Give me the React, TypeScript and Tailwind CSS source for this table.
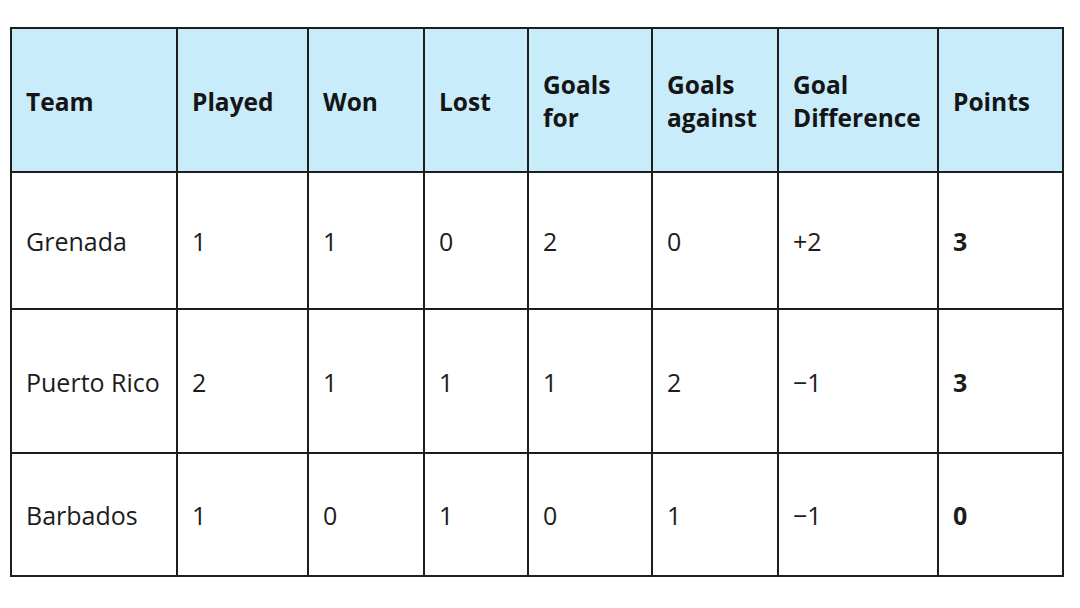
import React from "react";

const header = ["Team", "Played", "Won", "Lost", "Goals\nfor", "Goals\nagainst", "Goal\nDifference", "Points"];
const rows = [
  ["Grenada", "1", "1", "0", "2", "0", "+2", "3"],
  ["Puerto Rico", "2", "1", "1", "1", "2", "\u22121", "3"],
  ["Barbados", "1", "0", "1", "0", "1", "\u22121", "0"],
];

export default function App() {
  return (
    <div className="w-[1080px] h-[608px] bg-white font-['Open_Sans','Noto_Sans',sans-serif]">
      <div className="pt-[27px] pl-[10px]">
        <div className="inline-grid grid-cols-[166px_131px_116px_104px_124px_126px_160px_125px] grid-rows-[144px_137px_144px_123px] border-l-2 border-t-2 border-[#1e1e1e]">
          {header.map((h, i) => (
            <div
              key={`h${i}`}
              className="flex items-center bg-[#c9ecfb] border-r-2 border-b-2 border-[#1e1e1e] pl-[14px] pt-[2px] text-[24.5px] leading-[33px] font-bold text-[#151515] whitespace-pre-line"
            >
              {h}
            </div>
          ))}
          {rows.map((r, ri) =>
            r.map((c, i) => (
              <div
                key={`${ri}-${i}`}
                className={
                  i === 7
                    ? "flex items-center border-r-2 border-b-2 border-[#1e1e1e] pl-[14px] pt-[3px] text-[25px] font-bold text-[#1c1c1c]"
                    : "flex items-center border-r-2 border-b-2 border-[#1e1e1e] pl-[14px] pt-[3px] text-[25px] font-normal text-[#1c1c1c]"
                }
              >
                {c}
              </div>
            ))
          )}
        </div>
      </div>
    </div>
  );
}
